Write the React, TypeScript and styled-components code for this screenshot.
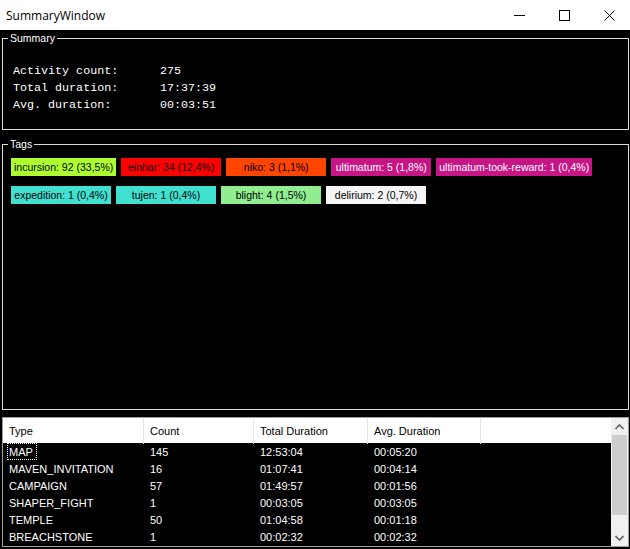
import styled, { createGlobalStyle } from 'styled-components';

const GlobalStyle = createGlobalStyle`
  html, body {
    margin: 0;
    padding: 0;
    background: #000;
  }
  body {
    width: 630px;
    height: 549px;
    overflow: hidden;
    font-family: "Liberation Sans", Arial, sans-serif;
  }
`;

const TAGS = [
  { name: 'incursion', text: 'incursion: 92 (33,5%)', bg: '#adff2f', fg: '#000' },
  { name: 'einhar', text: 'einhar: 34 (12,4%)', bg: '#ff0000', fg: '#000' },
  { name: 'niko', text: 'niko: 3 (1,1%)', bg: '#ff4500', fg: '#000' },
  { name: 'ultimatum', text: 'ultimatum: 5 (1,8%)', bg: '#c71585', fg: '#fff' },
  { name: 'utr', text: 'ultimatum-took-reward: 1 (0,4%)', bg: '#c71585', fg: '#fff' },
  { name: 'expedition', text: 'expedition: 1 (0,4%)', bg: '#40e0d0', fg: '#000' },
  { name: 'tujen', text: 'tujen: 1 (0,4%)', bg: '#40e0d0', fg: '#000' },
  { name: 'blight', text: 'blight: 4 (1,5%)', bg: '#90ee90', fg: '#000' },
  { name: 'delirium', text: 'delirium: 2 (0,7%)', bg: '#f5f5f5', fg: '#000' },
];

const ROWS = [
  ['MAP', '145', '12:53:04', '00:05:20'],
  ['MAVEN_INVITATION', '16', '01:07:41', '00:04:14'],
  ['CAMPAIGN', '57', '01:49:57', '00:01:56'],
  ['SHAPER_FIGHT', '1', '00:03:05', '00:03:05'],
  ['TEMPLE', '50', '01:04:58', '00:01:18'],
  ['BREACHSTONE', '1', '00:02:32', '00:02:32'],
];

const COLUMNS = '141px 110px 114px 113px 1fr';

const Window = styled.div`
  width: 630px;
  height: 549px;
  display: flex;
  flex-direction: column;
  background: #000;
  overflow: hidden;
`;

const TitleBar = styled.div`
  height: 30px;
  flex-shrink: 0;
  background: #fff;
  display: flex;
  align-items: center;
`;

const Title = styled.div`
  flex: 1;
  padding-left: 6px;
  font-family: "Open Sans", "Noto Sans", sans-serif;
  font-size: 12px;
  color: #000;
`;

const Controls = styled.div`
  display: flex;
  height: 100%;
  margin-right: -2px;
`;

const ControlButton = styled.div`
  width: 45px;
  height: 100%;
  display: flex;
  align-items: center;
  justify-content: center;
`;

const Body = styled.div`
  flex: 1;
  min-height: 0;
  display: flex;
  flex-direction: column;
  padding: 1px 1px 2px 2px;
`;

const GroupBox = styled.fieldset<{ $grow?: boolean }>`
  margin: 0;
  padding: 0;
  min-width: 0;
  border: 1px solid #dcdcdc;
  ${p => p.$grow && `
    flex: 1;
    min-height: 0;
    margin-top: 7px;
  `}
`;

const Legend = styled.legend`
  margin-left: 5px;
  padding: 0 2px;
  font-size: 10.5px;
  line-height: 14px;
  color: #fff;
`;

const SummaryGrid = styled.div`
  display: grid;
  grid-template-columns: 147px auto;
  grid-auto-rows: 17px;
  align-items: center;
  padding: 17px 0 16px 10px;
  font-family: "Liberation Mono", "Courier New", monospace;
  font-size: 11.7px;
  color: #fff;
`;

const TagFlow = styled.div`
  display: flex;
  flex-wrap: wrap;
  gap: 10px 5px;
  padding: 7px 0 0 8px;
`;

const Tag = styled.div<{ $bg: string; $fg: string }>`
  min-width: 100px;
  height: 18px;
  padding: 0 3px;
  box-sizing: border-box;
  background: ${p => p.$bg};
  color: ${p => p.$fg};
  font-size: 10.5px;
  line-height: 19px;
  text-align: center;
  white-space: nowrap;
`;

const ListView = styled.div`
  height: 130px;
  flex-shrink: 0;
  margin-top: 7px;
  box-sizing: border-box;
  border: 1px solid #a0a0a0;
  display: flex;
`;

const ListMain = styled.div`
  flex: 1;
  display: flex;
  flex-direction: column;
  min-width: 0;
`;

const HeaderRow = styled.div`
  display: grid;
  grid-template-columns: ${COLUMNS};
  height: 25px;
  background: #fff;
  flex-shrink: 0;
`;

const HeaderCell = styled.div<{ $last?: boolean }>`
  padding-left: 6px;
  font-size: 11px;
  line-height: 26px;
  color: #000;
  border-right: ${p => (p.$last ? 'none' : '1px solid #e5e5e5')};
`;

const Row = styled.div`
  display: grid;
  grid-template-columns: ${COLUMNS};
  height: 17px;
`;

const Cell = styled.div`
  padding-left: 6px;
  font-size: 11px;
  line-height: 18px;
  color: #fff;
  white-space: nowrap;
`;

const Focused = styled.span`
  display: inline-block;
  margin-left: -2px;
  padding: 0 3px 0 1px;
  height: 15px;
  line-height: 16px;
  border: 1px dotted #fff;
  vertical-align: top;
`;

const ScrollBar = styled.div`
  width: 17px;
  flex-shrink: 0;
  background: #f0f0f0;
  display: flex;
  flex-direction: column;
`;

const ScrollArrow = styled.div`
  height: 17px;
  display: flex;
  align-items: center;
  justify-content: center;
`;

const Thumb = styled.div`
  height: 80px;
  margin: 0 1px;
  background: #cdcdcd;
`;

const Track = styled.div`
  flex: 1;
`;

function App() {
  return (
    <>
      <GlobalStyle />
      <Window>
        <TitleBar>
          <Title>SummaryWindow</Title>
          <Controls>
            <ControlButton>
              <svg width="11" height="11" viewBox="0 0 11 11">
                <path d="M0 5.5H11" stroke="#000" strokeWidth="1" />
              </svg>
            </ControlButton>
            <ControlButton>
              <svg width="11" height="11" viewBox="0 0 11 11">
                <rect x="0.5" y="0.5" width="10" height="10" fill="none" stroke="#000" strokeWidth="1" />
              </svg>
            </ControlButton>
            <ControlButton>
              <svg width="11" height="11" viewBox="0 0 11 11">
                <path d="M0.5 0.5L10.5 10.5M10.5 0.5L0.5 10.5" stroke="#000" strokeWidth="1" />
              </svg>
            </ControlButton>
          </Controls>
        </TitleBar>

        <Body>
          <GroupBox>
            <Legend>Summary</Legend>
            <SummaryGrid>
              <span>Activity count:</span>
              <span>275</span>
              <span>Total duration:</span>
              <span>17:37:39</span>
              <span>Avg. duration:</span>
              <span>00:03:51</span>
            </SummaryGrid>
          </GroupBox>

          <GroupBox $grow>
            <Legend>Tags</Legend>
            <TagFlow>
              {TAGS.map(t => (
                <Tag key={t.name} $bg={t.bg} $fg={t.fg}>
                  {t.text}
                </Tag>
              ))}
            </TagFlow>
          </GroupBox>

          <ListView>
            <ListMain>
              <HeaderRow>
                <HeaderCell>Type</HeaderCell>
                <HeaderCell>Count</HeaderCell>
                <HeaderCell>Total Duration</HeaderCell>
                <HeaderCell>Avg. Duration</HeaderCell>
                <HeaderCell $last />
              </HeaderRow>
              {ROWS.map((r, i) => (
                <Row key={r[0]}>
                  <Cell>{i === 0 ? <Focused>{r[0]}</Focused> : r[0]}</Cell>
                  <Cell>{r[1]}</Cell>
                  <Cell>{r[2]}</Cell>
                  <Cell>{r[3]}</Cell>
                  <Cell />
                </Row>
              ))}
            </ListMain>
            <ScrollBar>
              <ScrollArrow>
                <svg width="9" height="6" viewBox="0 0 9 6">
                  <path d="M0.5 5L4.5 1L8.5 5" fill="none" stroke="#606060" strokeWidth="1.6" />
                </svg>
              </ScrollArrow>
              <Thumb />
              <Track />
              <ScrollArrow>
                <svg width="9" height="6" viewBox="0 0 9 6">
                  <path d="M0.5 1L4.5 5L8.5 1" fill="none" stroke="#606060" strokeWidth="1.6" />
                </svg>
              </ScrollArrow>
            </ScrollBar>
          </ListView>
        </Body>
      </Window>
    </>
  );
}

export default App;
